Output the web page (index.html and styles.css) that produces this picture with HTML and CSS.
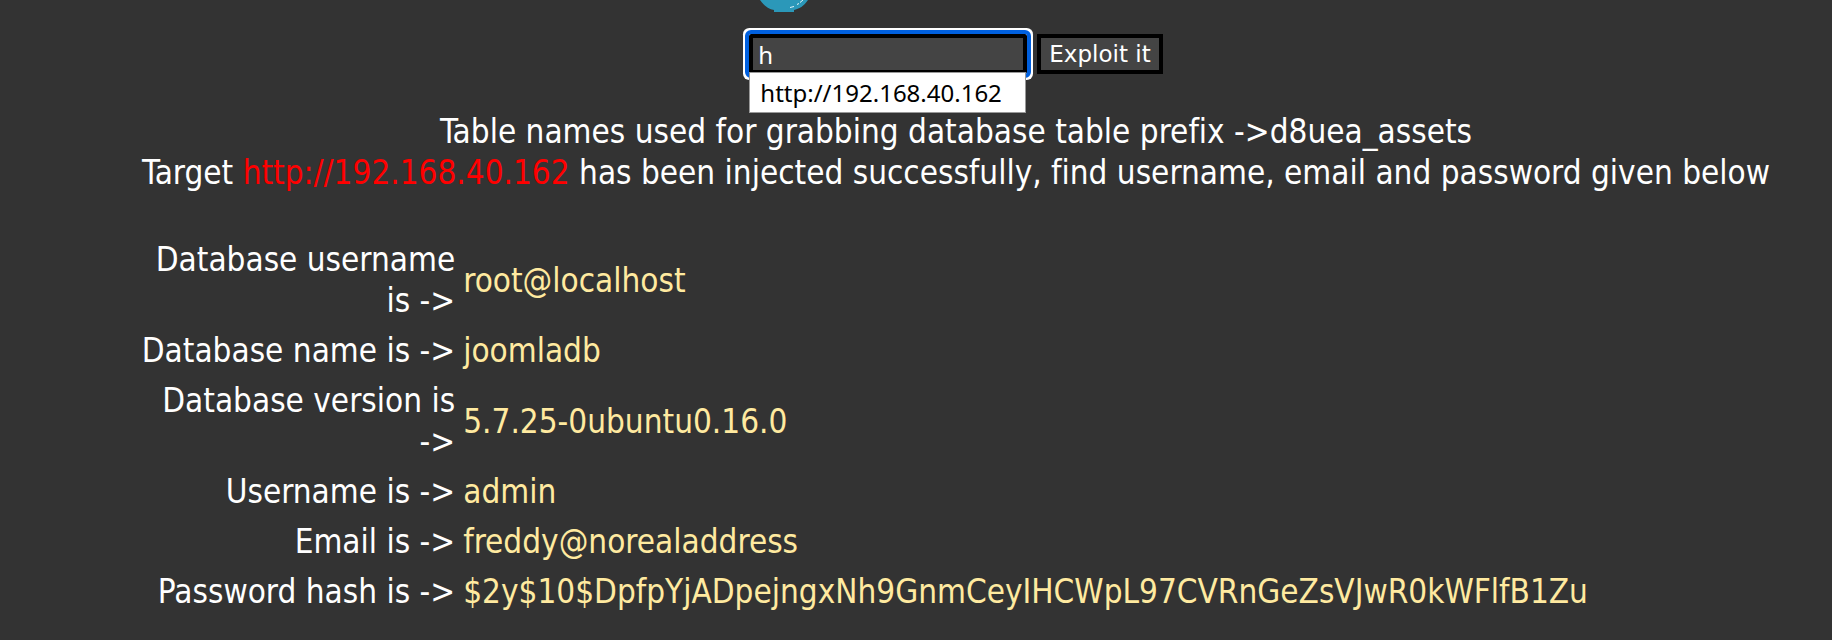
FILE: index.html
```html
<!DOCTYPE html>
<html lang="en">

<head>
    <meta charset="UTF-8">
    <meta name="viewport" content="width=device-width, initial-scale=1.0">
    <title>Exploit it</title>
    <link rel="stylesheet" href="styles.css">
</head>

<body>
    <div class="logo">
        <svg width="48" height="12" viewBox="0 0 48 12" aria-hidden="true">
            <path d="M0 0H48C44 6 39 9 34 10V12H14V10C9 9 4 6 0 0Z" fill="#2b98b9" />
            <path d="M30 7.5L34 6.5M37 4.5L39 3.5M40 2.5L43 0" fill="none" stroke="#e4f4f8" stroke-width="1" />
        </svg>
    </div>
    <form class="target-form" action="#" method="post">
        <div class="target">
            <input type="text" name="url" class="url" value="h" aria-label="Target" autocomplete="off">
            <div class="suggestions">http://192.168.40.162</div>
        </div>
        <button type="submit" class="submit">Exploit it</button>
    </form>
    <div class="result">
        <p class="message">Table names used for grabbing database table prefix -&gt;d8uea_assets</p>
        <p class="message">Target <span class="host">http://192.168.40.162</span> has been injected successfully, find username, email and password given below</p>
        <table class="details">
            <tr>
                <th scope="row">Database username<br>is -&gt;</th>
                <td>root@localhost</td>
            </tr>
            <tr>
                <th scope="row">Database name is -&gt;</th>
                <td>joomladb</td>
            </tr>
            <tr>
                <th scope="row">Database version is<br>-&gt;</th>
                <td>5.7.25-0ubuntu0.16.0</td>
            </tr>
            <tr>
                <th scope="row">Username is -&gt;</th>
                <td>admin</td>
            </tr>
            <tr>
                <th scope="row">Email is -&gt;</th>
                <td>freddy@norealaddress</td>
            </tr>
            <tr>
                <th scope="row">Password hash is -&gt;</th>
                <td>$2y$10$DpfpYjADpejngxNh9GnmCeyIHCWpL97CVRnGeZsVJwR0kWFlfB1Zu</td>
            </tr>
        </table>
    </div>
</body>

</html>
```
FILE: styles.css
```css
body {
    margin: 0;
    padding-left: 80px;
    background-color: #333;
    color: #fff;
    font-family: Tahoma, "DejaVu Sans Condensed", sans-serif;
    font-size: 33px;
    font-variant-ligatures: none;
    line-height: 41px;
}

.logo {
    display: flex;
    justify-content: center;
    padding-right: 344px;
}

.target-form {
    display: flex;
    justify-content: center;
    gap: 10px;
    margin-top: 22px;
}

.target {
    position: relative;
}

.url,
.submit {
    box-sizing: border-box;
    height: 40px;
    border: 4px solid #000;
    background-color: #444;
    color: #fff;
    font-family: Verdana, "DejaVu Sans", sans-serif;
    font-size: 23px;
}

.url {
    display: block;
    width: 278px;
    padding: 0 5px;
    outline: 4px solid #0060df;
    box-shadow: 0 0 0 6px #fff;
    border-radius: 2px;
    font-family: "Segoe UI", "Noto Sans", sans-serif;
    font-size: 24px;
}

.submit {
    padding: 0 8px;
}

/* drop-down list under the text box */
.suggestions {
    position: absolute;
    top: 38px;
    left: 0;
    box-sizing: border-box;
    width: 277px;
    padding: 0 10px;
    border: 1px solid #999;
    background-color: #fff;
    color: #000;
    font-family: "Segoe UI", "Noto Sans", sans-serif;
    font-size: 24px;
    line-height: 39px;
}

.result {
    padding: 37px 48px 0;
}

.message {
    margin: 0 -48px;
    text-align: center;
    white-space: nowrap;
}

.host {
    color: #f00;
}

.details {
    width: 100%;
    margin-top: 42px;
    border-collapse: collapse;
}

.details th,
.details td {
    padding: 4px 4px 5px;
}

.details th {
    width: 20%;
    font-weight: normal;
    text-align: right;
    white-space: nowrap;
}

.details td {
    color: #ffeaa0;
}
```
